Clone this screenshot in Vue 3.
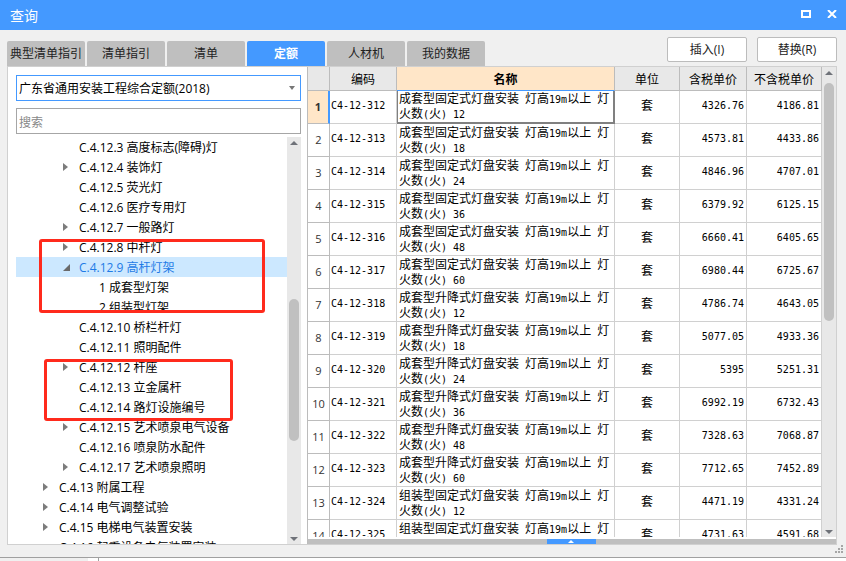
<script setup>
import { ref } from 'vue'

const tabs = ['典型清单指引', '清单指引', '清单', '定额', '人材机', '我的数据']
const activeTab = ref('定额')
const library = ref('广东省通用安装工程综合定额(2018)')
const keyword = ref('')

const nodes = [
  { level: 2, text: 'C.4.12.3 高度标志(障碍)灯' },
  { level: 2, text: 'C.4.12.4 装饰灯', state: 'closed' },
  { level: 2, text: 'C.4.12.5 荧光灯' },
  { level: 2, text: 'C.4.12.6 医疗专用灯' },
  { level: 2, text: 'C.4.12.7 一般路灯', state: 'closed' },
  { level: 2, text: 'C.4.12.8 中杆灯', state: 'closed' },
  { level: 2, text: 'C.4.12.9 高杆灯架', state: 'open' },
  { level: 3, text: '1 成套型灯架' },
  { level: 3, text: '2 组装型灯架' },
  { level: 2, text: 'C.4.12.10 桥栏杆灯' },
  { level: 2, text: 'C.4.12.11 照明配件' },
  { level: 2, text: 'C.4.12.12 杆座', state: 'closed' },
  { level: 2, text: 'C.4.12.13 立金属杆' },
  { level: 2, text: 'C.4.12.14 路灯设施编号' },
  { level: 2, text: 'C.4.12.15 艺术喷泉电气设备', state: 'closed' },
  { level: 2, text: 'C.4.12.16 喷泉防水配件' },
  { level: 2, text: 'C.4.12.17 艺术喷泉照明', state: 'closed' },
  { level: 1, text: 'C.4.13 附属工程', state: 'closed' },
  { level: 1, text: 'C.4.14 电气调整试验', state: 'closed' },
  { level: 1, text: 'C.4.15 电梯电气装置安装', state: 'closed' },
  { level: 1, text: 'C.4.16 起重设备电气装置安装' },
]

const rows = [
  ['成套型固定式', 12, '4326.76', '4186.81'],
  ['成套型固定式', 18, '4573.81', '4433.86'],
  ['成套型固定式', 24, '4846.96', '4707.01'],
  ['成套型固定式', 36, '6379.92', '6125.15'],
  ['成套型固定式', 48, '6660.41', '6405.65'],
  ['成套型固定式', 60, '6980.44', '6725.67'],
  ['成套型升降式', 12, '4786.74', '4643.05'],
  ['成套型升降式', 18, '5077.05', '4933.36'],
  ['成套型升降式', 24, '5395', '5251.31'],
  ['成套型升降式', 36, '6992.19', '6732.43'],
  ['成套型升降式', 48, '7328.63', '7068.87'],
  ['成套型升降式', 60, '7712.65', '7452.89'],
  ['组装型固定式', 12, '4471.19', '4331.24'],
  ['组装型固定式', 18, '4731.63', '4591.68'],
].map(([kind, lamps, taxed, untaxed], i) => ({
  no: i + 1,
  code: `C4-12-${312 + i}`,
  runs: `${kind}灯盘安装 灯高19m以上 灯火数(火) ${lamps}`.match(/[\x20-\x7e]+|[^\x20-\x7e]+/g),
  taxed,
  untaxed,
}))
</script>

<template>
  <div class="window">
    <header class="titlebar">
      <h1>查询</h1>
      <div class="window-buttons">
        <button type="button" aria-label="最大化">
          <svg width="10" height="8" viewBox="0 0 10 8"><rect x="1" y="1" width="8" height="6" fill="none" stroke="#fff" stroke-width="2" /></svg>
        </button>
        <button type="button" aria-label="关闭">
          <svg width="10" height="8" viewBox="0 0 10 8"><path d="M1 0 L9 8 M9 0 L1 8" fill="none" stroke="#fff" stroke-width="2" /></svg>
        </button>
      </div>
    </header>

    <div class="toolbar">
      <nav class="tabs" role="tablist">
        <button
          v-for="tab in tabs"
          :key="tab"
          type="button"
          role="tab"
          class="tab"
          :class="{ active: tab === activeTab }"
          :aria-selected="tab === activeTab"
          @click="activeTab = tab"
        >{{ tab }}</button>
      </nav>
      <div class="actions">
        <button type="button">插入(I)</button>
        <button type="button">替换(R)</button>
      </div>
    </div>

    <main class="panels">
      <section class="side">
        <div class="combo">
          <select v-model="library" aria-label="定额库">
            <option>广东省通用安装工程综合定额(2018)</option>
          </select>
          <svg class="caret" width="6" height="4" viewBox="0 0 6 4"><path d="M0 0h6L3 4z" fill="#777" /></svg>
        </div>
        <input v-model="keyword" class="search" type="text" placeholder="搜索" aria-label="搜索" />
        <div class="tree-area">
          <ul class="tree">
            <li
              v-for="node in nodes"
              :key="node.text"
              :class="['level-' + node.level, { selected: node.state === 'open' }]"
            >
              <span class="toggle">
                <svg v-if="node.state === 'closed'" width="5" height="8" viewBox="0 0 5 8"><path d="M0 0l5 4l-5 4z" fill="#7c7c7c" /></svg>
                <svg v-else-if="node.state === 'open'" width="7" height="7" viewBox="0 0 7 7"><path d="M7 0v7H0z" fill="#6a6a6a" /></svg>
              </span>
              <span class="label">{{ node.text }}</span>
            </li>
          </ul>
          <div class="scrollbar">
            <svg width="8" height="4" viewBox="0 0 8 4"><path d="M0 4h8L4 0z" fill="#6f7279" /></svg>
            <div class="track"><i class="before-low"></i><i class="thumb thumb-low"></i><i class="after-low"></i></div>
            <svg width="8" height="4" viewBox="0 0 8 4"><path d="M0 0h8L4 4z" fill="#6f7279" /></svg>
          </div>
        </div>
      </section>

      <section class="grid-panel">
        <div class="grid-area">
          <div class="table-clip">
            <table>
              <colgroup>
                <col class="c-no" /><col class="c-code" /><col /><col class="c-unit" /><col class="c-tax" /><col class="c-notax" />
              </colgroup>
              <thead>
                <tr>
                  <th></th>
                  <th>编码</th>
                  <th class="current">名称</th>
                  <th>单位</th>
                  <th>含税单价</th>
                  <th>不含税单价</th>
                </tr>
              </thead>
              <tbody>
                <tr v-for="row in rows" :key="row.no" :class="{ current: row.no === 1 }">
                  <th scope="row">{{ row.no }}</th>
                  <td class="code">{{ row.code }}</td>
                  <td class="name"><template v-for="(run, i) in row.runs" :key="i"><span :class="{ latin: run.charCodeAt(0) < 127 }">{{ run }}</span></template></td>
                  <td class="unit">套</td>
                  <td class="price">{{ row.taxed }}</td>
                  <td class="price">{{ row.untaxed }}</td>
                </tr>
              </tbody>
            </table>
          </div>
          <div class="scrollbar">
            <svg width="8" height="4" viewBox="0 0 8 4"><path d="M0 4h8L4 0z" fill="#6f7279" /></svg>
            <div class="track"><i class="thumb thumb-high"></i><i class="after-high"></i></div>
            <svg width="8" height="4" viewBox="0 0 8 4"><path d="M0 0h8L4 4z" fill="#6f7279" /></svg>
          </div>
        </div>
        <div class="splitter">
          <button type="button" aria-label="展开">
            <svg width="6" height="3" viewBox="0 0 6 3"><path d="M0 3h6L3 0z" fill="#fff" /></svg>
          </button>
        </div>
      </section>
    </main>

    <footer class="status">
      <svg width="8" height="8" viewBox="0 0 8 8"><path d="M6 0h2v2h-2zM3 3h2v2h-2zM6 3h2v2h-2zM0 6h2v2h-2zM3 6h2v2h-2zM6 6h2v2h-2z" fill="#a6a6a6" /></svg>
    </footer>
    <div class="under"><i class="under-fill"></i><i class="under-edge"></i></div>

    <div class="mark mark-a"></div>
    <div class="mark mark-b"></div>
  </div>
</template>

<style>
body {
  background: #fff;
}
</style>

<style scoped>
* {
  box-sizing: border-box;
}
.window {
  position: relative;
  display: flex;
  flex-direction: column;
  height: 100vh;
  overflow: hidden;
  background: #f0f0f0;
  font: 12px/20px "Open Sans", "Noto Sans CJK SC", sans-serif;
  color: #000;
}
button,
select,
input {
  margin: 0;
  padding: 0;
  border: 0;
  background: none;
  font: inherit;
  color: inherit;
}
svg {
  display: block;
  flex: none;
}
.titlebar {
  flex: none;
  display: flex;
  justify-content: space-between;
  height: 30px;
  padding: 0 9px 0 10px;
  background: #4499ff;
  color: #fff;
}
.titlebar h1 {
  margin: 0;
  font-size: 14px;
  font-weight: 400;
  line-height: 32px;
}
.window-buttons {
  display: flex;
  gap: 16px;
  padding-top: 10px;
}
.window-buttons button {
  display: flex;
  width: 10px;
  height: 8px;
}
.toolbar {
  flex: none;
  display: flex;
  justify-content: space-between;
  height: 36px;
  padding: 0 9px 0 7px;
}
.tabs {
  display: flex;
  align-items: flex-end;
  gap: 2px;
}
.tab {
  width: 78px;
  height: 25px;
  border-radius: 2px 2px 0 0;
  background: #bfbfbf;
  color: #222;
  white-space: nowrap;
}
.tab.active {
  background: #4499ff;
  color: #fff;
  font-weight: 700;
}
.actions {
  display: flex;
  gap: 10px;
  padding-top: 7px;
}
.actions button {
  width: 80px;
  height: 25px;
  padding-top: 1px;
  border: 1px solid #bcbcbc;
  border-radius: 2px;
  background: #fff;
  color: #222;
}
.panels {
  flex: 1;
  min-height: 0;
  display: flex;
  margin: 0 9px 0 7px;
  border: 1px solid #d0d0d0;
  background: #fff;
}
.side {
  flex: none;
  width: 299px;
  display: flex;
  flex-direction: column;
  padding: 8px 6px 0 8px;
}
.combo {
  flex: none;
  display: flex;
  align-items: center;
  height: 26px;
  padding-right: 5px;
  border: 1px solid #4499ff;
}
.combo select {
  flex: 1;
  height: 24px;
  padding: 2px 2px 0;
  appearance: none;
  outline: 0;
}
.search {
  flex: none;
  height: 26px;
  margin: 7px 0 3px;
  padding: 2px 2px 0;
  border: 1px solid #a6a6a6;
  outline: 0;
}
.search::placeholder {
  color: #888;
  opacity: 1;
}
.tree-area {
  flex: 1;
  min-height: 0;
  display: flex;
}
.tree {
  flex: 1;
  min-width: 0;
  margin: 0;
  padding: 0;
  overflow: hidden;
  list-style: none;
}
.tree li {
  display: flex;
  height: 20px;
  white-space: nowrap;
}
.label {
  line-height: 22px;
}
.level-1 {
  padding-left: 23px;
}
.level-2 {
  padding-left: 43px;
}
.level-3 {
  padding-left: 63px;
}
.selected {
  background: #cce8ff;
  color: #1e7be6;
}
.toggle {
  display: flex;
  align-items: center;
  width: 20px;
  padding-left: 4px;
}
.scrollbar {
  flex: none;
  display: flex;
  flex-direction: column;
  align-items: center;
  gap: 8px;
  width: 14px;
  padding: 4px 0 3px;
  background: #e8e8e8;
}
.track {
  flex: 1;
  display: flex;
  flex-direction: column;
  width: 10px;
}
.thumb {
  border-radius: 5px;
  background: #c0c0c0;
}
.before-low {
  flex: 148;
}
.thumb-low {
  flex: 143;
}
.after-low {
  flex: 89;
}
.thumb-high {
  flex: 240;
}
.after-high {
  flex: 203;
}
.grid-panel {
  flex: 1;
  min-width: 0;
  display: flex;
  flex-direction: column;
  border-left: 1px solid #bcbcbc;
}
.grid-area {
  flex: 1;
  min-height: 0;
  display: flex;
}
.table-clip {
  flex: 1;
  min-width: 0;
  overflow: hidden;
}
table {
  width: 100%;
  table-layout: fixed;
  border-collapse: separate;
  border-spacing: 0;
}
.c-no {
  width: 22px;
}
.c-code,
.c-tax {
  width: 67px;
}
.c-unit {
  width: 65px;
}
.c-notax {
  width: 75px;
}
th,
td {
  padding: 0;
  border: solid #d0d0d0;
  border-width: 0 1px 1px 0;
}
th {
  font-weight: 400;
}
thead th {
  height: 24px;
  padding-top: 2px;
  border-color: #bcbcbc;
  background: #e8e8e8;
}
thead .current {
  border-bottom-color: #4499ff;
  background: #ffe6c8;
  font-weight: 700;
}
tbody th {
  border-color: #bcbcbc;
  font-size: 11px;
  color: #333;
}
tbody td {
  height: 33px;
  padding-bottom: 2px;
  font-family: "Liberation Sans", "Noto Sans CJK SC", sans-serif;
  line-height: 14px;
}
.current th {
  border-right: 2px solid #4499ff;
  background: #ffe6c8;
  font-weight: 700;
}
.current .name {
  border: solid #808080;
  border-width: 0 2px 2px 0;
  box-shadow: inset 1px 0 #808080;
}
td.code,
td.price,
.latin {
  font-family: "DejaVu Sans Mono", monospace;
  font-size: 10px;
}
.code {
  padding-left: 1px;
}
td.name {
  padding: 1px 0 0 2px;
}
.unit {
  text-align: center;
}
.price {
  padding-right: 2px;
  text-align: right;
}
.splitter {
  flex: none;
  display: flex;
  justify-content: center;
  height: 7px;
  padding-right: 2px;
  border-top: 2px solid #fff;
  background: #bfbfbf;
}
.splitter button {
  display: flex;
  align-items: center;
  justify-content: center;
  width: 49px;
  background: #4499ff;
}
.status {
  flex: none;
  display: flex;
  justify-content: flex-end;
  height: 13px;
  padding-right: 3px;
  border-bottom: 1px solid #a0a0a0;
}
.under {
  flex: none;
  display: flex;
  gap: 10px;
  height: 3px;
  background: #fff;
}
.under-fill {
  width: 88px;
  background: #f0f0f0;
}
.under-edge {
  width: 1px;
  background: #a0a0a0;
}
.mark {
  position: absolute;
  border: 3px solid #ff2a1c;
  border-radius: 3px;
  pointer-events: none;
}
.mark-a {
  left: 39px;
  top: 239px;
  width: 226px;
  height: 74px;
}
.mark-b {
  left: 44px;
  top: 359px;
  width: 189px;
  height: 62px;
}
</style>
